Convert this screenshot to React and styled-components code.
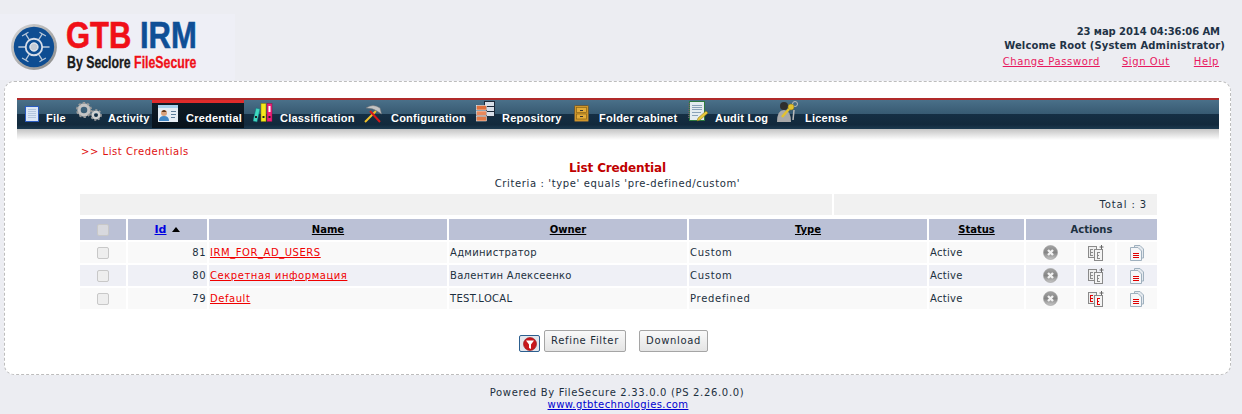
import React from 'react'
import styled, { createGlobalStyle } from 'styled-components'

const GlobalStyle = createGlobalStyle`
    html, body {
        margin: 0;
        padding: 0;
        background: #ecedf2;
    }
    body {
        font-family: "DejaVu Sans", Verdana, sans-serif;
        font-size: 10px;
        color: #1c3040;
    }
`

const Page = styled.div`
    width: 1242px;
    height: 414px;
    overflow: hidden;
`

const Header = styled.div`
    height: 81px;
    display: flex;
    justify-content: space-between;
`

const LogoBox = styled.div`
    width: 224px;
    height: 66px;
    margin-top: 14px;
    padding-left: 11px;
    background: #eeeff6;
    display: flex;
    align-items: center;
    gap: 9px;
`

const LogoText = styled.div`
    display: flex;
    flex-direction: column;
    font-family: "Liberation Sans", Arial, sans-serif;
    font-weight: 700;
    transform: translateY(-2px);
`

const LogoTitle = styled.div`
    font-size: 36px;
    line-height: 32px;
    width: 130px;
    white-space: nowrap;
    transform: scaleX(0.86);
    transform-origin: left;
    color: #f01018;
    -webkit-text-stroke: 0.6px currentColor;

    span {
        color: #0f4f96;
    }
`

const LogoSub = styled.div`
    font-size: 16px;
    line-height: 17px;
    margin: 2px 0 0 1px;
    white-space: nowrap;
    transform: scaleX(0.77);
    transform-origin: left;
    color: #1a1a1a;
    -webkit-text-stroke: 0.3px currentColor;

    span {
        color: #f01018;
    }
`

const UserBox = styled.div`
    width: 300px;
    padding: 25px 17px 0 0;
    text-align: right;
`

const UserLine = styled.div`
    font-weight: 700;
    font-size: 10px;
    line-height: 14px;
    color: #1f3346;
    padding-right: ${props => props.inset || 0}px;
    white-space: nowrap;
    letter-spacing: ${props => props.spacing}px;
`

const TopLinks = styled.div`
    display: flex;
    justify-content: flex-end;
    margin-top: 2px;
    padding-right: 6px;
    line-height: 14px;
`

const TopLink = styled.a`
    color: #e8185f;
    text-decoration: underline;
    letter-spacing: 0.6px;
    margin-left: ${props => props.ml || 0}px;
`

const Panel = styled.div`
    box-sizing: border-box;
    width: 1227px;
    height: 294px;
    margin-left: 4px;
    padding: 16px 11px 0 11px;
    background: #fff;
    border: 1px dashed #bdbdbd;
    border-radius: 10px;
`

const Nav = styled.div`
    display: flex;
    height: 31px;
    box-sizing: border-box;
    width: 1202px;
    margin-left: 1px;
    padding-left: 8px;
    border-top: 2px solid #b02a2a;
    background: linear-gradient(to bottom, #4a7089 0, #375a72 48%, #152f44 48%, #12293c 85%, #1c3a50 100%);
`

const NavShadow = styled.div`
    width: 1202px;
    height: 11px;
    margin-left: 1px;
    background: linear-gradient(to bottom, #c4c4c4, #ffffff);
`

const NavItem = styled.div`
    display: flex;
    align-items: flex-start;
    width: ${props => props.w}px;
    height: ${props => (props.$active ? 28 : 29)}px;
    flex-shrink: 0;
    box-sizing: border-box;
    padding-left: ${props => props.pl || 0}px;
    background: ${props => (props.$active ? 'linear-gradient(to bottom, #0f1b26, #07121b)' : 'none')};
    border-top: ${props => (props.$active ? '3px solid #e02b2b' : '0')};
`

const NavIcon = styled.div`
    width: ${props => props.w}px;
    height: 24px;
    margin-top: ${props => props.top || 0}px;
    flex-shrink: 0;

    svg {
        display: block;
    }
`

const NavLabel = styled.span`
    font-family: "Liberation Sans", Arial, sans-serif;
    font-weight: 700;
    font-size: 11px;
    line-height: 13px;
    letter-spacing: 0.22px;
    color: #fff;
    white-space: nowrap;
    margin-top: ${props => (props.$active ? 9 : 12)}px;
`

const Crumb = styled.div`
    margin: 5px 0 0 65px;
    line-height: 13px;
    color: #e01010;
    letter-spacing: 0.55px;
    font-size: 10px;
`

const Heading = styled.div`
    text-align: center;
    font-weight: 700;
    font-size: 12px;
    line-height: 16px;
    margin-top: 2px;
    letter-spacing: -0.15px;
    color: #c00000;
`

const Criteria = styled.div`
    text-align: center;
    line-height: 14px;
    margin-top: 1px;
    font-size: 10px;
    letter-spacing: 0.63px;
`

const SummaryBar = styled.div`
    display: flex;
    gap: 2px;
    width: 1077px;
    margin: 3px 0 0 64px;
`

const SummaryCell = styled.div`
    box-sizing: border-box;
    height: 21px;
    line-height: 21px;
    width: ${props => props.w}px;
    background: #f1f1f1;
    text-align: right;
    padding-right: ${props => props.pr || 0}px;
    letter-spacing: 0.9px;
`

const Table = styled.table`
    border-collapse: separate;
    border-spacing: 2px;
    table-layout: fixed;
    width: 1081px;
    margin: 2px 0 0 62px;
    font-size: 10px;
`

const HeadCell = styled.th`
    height: 21px;
    padding: 0;
    background: #bbc1d6;
    font-weight: 700;
    color: #000;
    text-align: center;
    font-size: 10px;
`

const HeadLink = styled.a`
    color: ${props => props.$blue ? '#0000e0' : '#000'};
    text-decoration: underline;
    font-size: ${props => props.$blue ? 11 : 10}px;
`

const Arrow = styled.span`
    display: inline-block;
    width: 0;
    height: 0;
    margin-left: 6px;
    vertical-align: 1px;
    border-left: 4px solid transparent;
    border-right: 4px solid transparent;
    border-bottom: 5px solid #000;
`

const ActionsHead = styled(HeadCell)`
    color: #1c3040;
`

const Row = styled.tr`
    td {
        height: 21px;
        padding: 0 0 0 1px;
        background: ${props => (props.$alt ? '#eff0f6' : '#f9f9f9')};
        white-space: nowrap;
        letter-spacing: 0.3px;
    }
`

const CheckCell = styled.td`
    text-align: center;
    padding: 0 !important;
`

const Check = styled.span`
    display: block;
    width: 10px;
    height: 10px;
    margin: 0 auto;
    background: ${props => (props.$head ? '#d8d9de' : '#eeeeee')};
    border: 1px solid #c8c8c8;
    border-radius: 2px;
`

const IdCell = styled.td`
    text-align: right;
    padding-right: 1px !important;
    letter-spacing: 0.5px !important;
`

const NameLink = styled.a`
    color: #f00000;
    text-decoration: underline;
    letter-spacing: 0.55px;
`

const TypeCell = styled.td`
    letter-spacing: 0.7px !important;
`

const IconCell = styled.td`
    text-align: center;
    padding: 0 !important;

    svg {
        display: block;
        margin: 0 auto;
    }
`

const Buttons = styled.div`
    display: flex;
    justify-content: center;
    align-items: flex-start;
    margin-top: 19px;
    padding-right: 8px;
`

const FilterIcon = styled.div`
    width: 19px;
    height: 15px;
    margin-top: 5px;
    margin-right: 4px;
    border: 1px solid #2c5f8f;
    border-radius: 2px;
    display: flex;
    align-items: center;
    justify-content: center;
    background: #e4e6ec;
`

const Button = styled.div`
    box-sizing: border-box;
    height: 22px;
    width: ${props => props.w}px;
    margin-right: ${props => props.mr || 0}px;
    border: 1px solid #a5a5a5;
    border-radius: 2px;
    background: linear-gradient(to bottom, #f9f9f9, #e4e4e4);
    text-align: center;
    line-height: 20px;
    letter-spacing: 0.65px;
    color: #1c2c38;
`

const Footer = styled.div`
    margin-top: 12px;
    padding-right: 8px;
    text-align: center;
    line-height: 12px;
    letter-spacing: 0.67px;
    color: #1c3040;

    a {
        display: block;
        padding-left: 2px;
        letter-spacing: 0.4px;
        color: #0000d0;
        text-decoration: underline;
    }
`

const LogoMark = () => (
    <svg width="50" height="50" viewBox="0 0 50 50">
        <defs>
            <linearGradient id="rim" x1="0" y1="0" x2="1" y2="1">
                <stop offset="0" stopColor="#d8d8d8" />
                <stop offset="1" stopColor="#888" />
            </linearGradient>
        </defs>
        <circle cx="25" cy="25" r="25" fill="url(#rim)" />
        <circle cx="25" cy="25" r="22" fill="#0e4d92" />
        <g stroke="#b9c8da" strokeWidth="1.4" fill="none">
            <path d="M8 25H42M16 11L34 39M34 11L16 39" />
            <path d="M12 13l7-4M38 13l-7-4M12 37l7 4M38 37l-7 4" />
        </g>
        <circle cx="25" cy="25" r="9" fill="#0e4d92" stroke="#d6dde8" strokeWidth="2" />
        <circle cx="25" cy="25" r="4.5" fill="#c5ccd6" stroke="#fff" />
    </svg>
)

const FileIcon = () => (
    <svg width="15" height="16" viewBox="0 0 15 16">
        <rect x="0.5" y="0.5" width="13" height="15" fill="#dbe6f6" stroke="#2a5cc0" />
        <path d="M3 3.5h8M3 5.5h8M3 7.5h8M3 9.5h8M3 11.5h8" stroke="#b4c6de" />
    </svg>
)

const GearsIcon = () => (
    <svg width="26" height="20" viewBox="0 0 26 20">
        <circle cx="8" cy="8" r="5" fill="none" stroke="#c4c4c4" strokeWidth="3.4" />
        <circle cx="8" cy="8" r="7" fill="none" stroke="#9b9b9b" strokeWidth="2" strokeDasharray="2.4 2.1" />
        <circle cx="20" cy="13" r="3.3" fill="none" stroke="#d0d0d0" strokeWidth="2.6" />
        <circle cx="20" cy="13" r="5" fill="none" stroke="#a0a0a0" strokeWidth="1.6" strokeDasharray="2 1.7" />
    </svg>
)

const CardIcon = () => (
    <svg width="20" height="17" viewBox="0 0 20 17">
        <rect x="0" y="0" width="20" height="17" fill="#e6edf4" />
        <rect x="0" y="0" width="20" height="3" fill="#a8d0ec" />
        <circle cx="6" cy="8" r="3" fill="#d9a27c" />
        <path d="M3.5 7q2.5-4 5 0z" fill="#5a3518" />
        <path d="M1 16q0-5 5-5t5 5z" fill="#3f86c4" />
        <path d="M13 6.5h5M13 9.5h5M13 12.5h4" stroke="#5d7d98" />
    </svg>
)

const BindersIcon = () => (
    <svg width="20" height="20" viewBox="0 0 20 20">
        <path d="M3 5l4 1-3 13-4-1z" fill="#3fd8c0" stroke="#167" strokeWidth="0.5" />
        <rect x="8" y="0.5" width="5" height="18" fill="#f4e81c" stroke="#8a8200" strokeWidth="0.5" />
        <rect x="14" y="0.5" width="5" height="18" fill="#f01e78" stroke="#8a1040" strokeWidth="0.5" />
        <rect x="15.5" y="3" width="2" height="6" fill="#fff" />
        <rect x="9.5" y="13" width="2" height="2" fill="#222" />
        <rect x="15.5" y="13" width="2" height="2" fill="#222" />
        <rect x="2" y="13" width="2" height="2" fill="#222" />
    </svg>
)

const ToolsIcon = () => (
    <svg width="18" height="18" viewBox="0 0 18 18">
        <path d="M1 17L12 6" stroke="#f2c22a" strokeWidth="2" />
        <path d="M16 17L6 6" stroke="#d81818" strokeWidth="2" />
        <path d="M2 3Q9-2 16 3l1.5 6-4.5-3Q9 3 2 3z" fill="#c4c4c4" stroke="#777" strokeWidth="0.5" />
    </svg>
)

const RepoIcon = () => (
    <svg width="19" height="21" viewBox="0 0 19 21">
        <rect x="8.5" y="0.5" width="10" height="5" fill="#d8dee8" stroke="#1c2a3a" />
        <rect x="10.5" y="5.5" width="8" height="5" fill="#d8dee8" stroke="#1c2a3a" />
        <rect x="10.5" y="10.5" width="8" height="5" fill="#d8dee8" stroke="#1c2a3a" />
        <rect x="0.5" y="4.5" width="10" height="4.5" fill="#e0703c" stroke="#fff" strokeWidth="0.5" />
        <rect x="0.5" y="10" width="10" height="4.5" fill="#e8885c" stroke="#fff" strokeWidth="0.5" />
        <rect x="0.5" y="15.5" width="10" height="4.5" fill="#e07a48" stroke="#fff" strokeWidth="0.5" />
    </svg>
)

const CabinetIcon = () => (
    <svg width="15" height="17" viewBox="0 0 15 17">
        <rect x="0.5" y="0.5" width="14" height="16" rx="1" fill="#d0962a" stroke="#6a5a3a" />
        <rect x="2.5" y="2.5" width="10" height="5" fill="#e4ac3a" stroke="#8a6416" strokeWidth="0.7" />
        <rect x="2.5" y="9" width="10" height="5" fill="#e4ac3a" stroke="#8a6416" strokeWidth="0.7" />
        <path d="M6 5.5h3M6 11.5h3" stroke="#333" />
    </svg>
)

const NotebookIcon = () => (
    <svg width="20" height="21" viewBox="0 0 20 21">
        <rect x="1.5" y="0.5" width="15" height="19" fill="#e4ecf0" stroke="#2d7a40" />
        <path d="M4 4.5h10M4 6.5h10M4 8.5h10M4 11.5h9M4 14.5h6" stroke="#8aa2b8" />
        <path d="M1 2v16" stroke="#666" strokeWidth="2" strokeDasharray="1 1" />
        <path d="M9 20l1-3 8-7 2 2-8 7z" fill="#e8c83a" stroke="#7a6a1a" strokeWidth="0.5" />
    </svg>
)

const KeyIcon = () => (
    <svg width="21" height="22" viewBox="0 0 21 22">
        <circle cx="7" cy="5" r="4" fill="#2e2e2e" />
        <path d="M0 21q0-12 7-12t7 12z" fill="#a9a9a9" />
        <circle cx="18" cy="3" r="2.5" fill="none" stroke="#bbb" />
        <path d="M17 9l-1 10" stroke="#bbb" strokeWidth="1.5" />
        <circle cx="14" cy="6" r="3" fill="#e2c22e" stroke="#8c7512" strokeWidth="0.5" />
        <path d="M12 8l-7 8" stroke="#e2c22e" strokeWidth="2.5" />
    </svg>
)

const DeleteIcon = () => (
    <svg width="15" height="15" viewBox="0 0 15 15">
        <defs>
            <linearGradient id="ball" x1="0" y1="0" x2="0" y2="1">
                <stop offset="0" stopColor="#a4a4a4" />
                <stop offset="0.5" stopColor="#858585" />
                <stop offset="1" stopColor="#c8c8c8" />
            </linearGradient>
        </defs>
        <circle cx="7.5" cy="7.5" r="7" fill="url(#ball)" stroke="#9a9a9a" strokeWidth="0.6" />
        <path d="M5 5l5 5M10 5l-5 5" stroke="#f2f2f2" strokeWidth="2.4" />
    </svg>
)

const CopyIcon = ({ red }) => {
    const color = red ? '#e00000' : '#8a8a8a'
    return (
        <svg width="16" height="16" viewBox="0 0 16 16">
            <rect x="0.5" y="1.5" width="8" height="11" fill="#eee" stroke="#8a8a8a" />
            <path d="M2.5 4v6M2 4.5h3M2 7.5h3M2 10.5h3" stroke={color} />
            <rect x="6.5" y="4.5" width="8" height="11" fill="#f4f4f4" stroke="#8a8a8a" />
            <path d="M9.5 7v6M9 7.5h3M9 10.5h2M9 13.5h3" stroke={color} />
            <path d="M13.5 0v4M11.5 2h4" stroke="#666" />
        </svg>
    )
}

const DocIcon = () => (
    <svg width="14" height="16" viewBox="0 0 14 16">
        <path d="M4.5 0.5H10l3.5 3.5V13H4.5z" fill="#e4e9ee" stroke="#9fb0be" />
        <path d="M0.5 2.5H8l3.5 3.5v9.5H0.5z" fill="#f5f6f8" stroke="#9fb0be" />
        <path d="M3 8.5h6M3 10.5h6M3 12.5h6" stroke="#e00000" />
    </svg>
)

const FunnelIcon = () => (
    <svg width="14" height="14" viewBox="0 0 14 14">
        <circle cx="7" cy="7" r="6.5" fill="#c8171c" stroke="#8c1014" strokeWidth="0.6" />
        <path d="M3 3.5h8L8 7.5V12L6 11V7.5z" fill="#fff" />
    </svg>
)

const navItems = [
    { label: 'File', icon: FileIcon, w: 51, iconW: 21, top: 6 },
    { label: 'Activity', icon: GearsIcon, w: 76, iconW: 32, top: 2 },
    { label: 'Credential', icon: CardIcon, w: 92, pl: 6, iconW: 28, top: 2, active: true },
    { label: 'Classification', icon: BindersIcon, w: 120, pl: 9, iconW: 27, top: 3 },
    { label: 'Configuration', icon: ToolsIcon, w: 112, iconW: 27, top: 5 },
    { label: 'Repository', icon: RepoIcon, w: 98, iconW: 26, top: 1 },
    { label: 'Folder cabinet', icon: CabinetIcon, w: 114, iconW: 25, top: 5 },
    { label: 'Audit Log', icon: NotebookIcon, w: 89, iconW: 27, top: 1 },
    { label: 'License', icon: KeyIcon, w: 80, iconW: 28, top: 1 }
]

const rows = [
    { id: 81, name: 'IRM_FOR_AD_USERS', owner: 'Администратор', type: 'Custom' },
    { id: 80, name: 'Секретная информация', owner: 'Валентин Алексеенко', type: 'Custom', alt: true },
    { id: 79, name: 'Default', owner: 'TEST.LOCAL', type: 'Predefined', red: true }
]

const App = () => {
    return (
        <Page>
            <GlobalStyle />
            <Header>
                <LogoBox>
                    <LogoMark />
                    <LogoText>
                        <LogoTitle>GTB <span>IRM</span></LogoTitle>
                        <LogoSub>By Seclore <span>FileSecure</span></LogoSub>
                    </LogoText>
                </LogoBox>
                <UserBox>
                    <UserLine inset={5} spacing={-0.08}>23 мар 2014 04:36:06 AM</UserLine>
                    <UserLine spacing={0.12}>Welcome Root (System Administrator)</UserLine>
                    <TopLinks>
                        <TopLink>Change Password</TopLink>
                        <TopLink ml={22}>Sign Out</TopLink>
                        <TopLink ml={24}>Help</TopLink>
                    </TopLinks>
                </UserBox>
            </Header>
            <Panel>
                <Nav>
                    {navItems.map(item => {
                        const Icon = item.icon
                        return (
                            <NavItem key={item.label} w={item.w} pl={item.pl} $active={item.active}>
                                <NavIcon w={item.iconW} top={item.top}><Icon /></NavIcon>
                                <NavLabel $active={item.active}>{item.label}</NavLabel>
                            </NavItem>
                        )
                    })}
                </Nav>
                <NavShadow />
                <Crumb>&gt;&gt; List Credentials</Crumb>
                <Heading>List Credential</Heading>
                <Criteria>Criteria : 'type' equals 'pre-defined/custom'</Criteria>
                <SummaryBar>
                    <SummaryCell w={752} />
                    <SummaryCell w={323} pr={10}>Total : 3</SummaryCell>
                </SummaryBar>
                <Table>
                    <colgroup>
                        <col width="46" />
                        <col width="79" />
                        <col width="238" />
                        <col width="238" />
                        <col width="238" />
                        <col width="95" />
                        <col width="48" />
                        <col width="39" />
                        <col width="40" />
                    </colgroup>
                    <tbody>
                        <tr>
                            <HeadCell><Check $head /></HeadCell>
                            <HeadCell><HeadLink $blue>Id</HeadLink><Arrow /></HeadCell>
                            <HeadCell><HeadLink>Name</HeadLink></HeadCell>
                            <HeadCell><HeadLink>Owner</HeadLink></HeadCell>
                            <HeadCell><HeadLink>Type</HeadLink></HeadCell>
                            <HeadCell><HeadLink>Status</HeadLink></HeadCell>
                            <ActionsHead colSpan={3}>Actions</ActionsHead>
                        </tr>
                        {rows.map(row => (
                            <Row key={row.id} $alt={row.alt}>
                                <CheckCell><Check /></CheckCell>
                                <IdCell>{row.id}</IdCell>
                                <td><NameLink>{row.name}</NameLink></td>
                                <td>{row.owner}</td>
                                <TypeCell>{row.type}</TypeCell>
                                <td>Active</td>
                                <IconCell><DeleteIcon /></IconCell>
                                <IconCell><CopyIcon red={row.red} /></IconCell>
                                <IconCell><DocIcon /></IconCell>
                            </Row>
                        ))}
                    </tbody>
                </Table>
                <Buttons>
                    <FilterIcon><FunnelIcon /></FilterIcon>
                    <Button w={82} mr={13}>Refine Filter</Button>
                    <Button w={69}>Download</Button>
                </Buttons>
            </Panel>
            <Footer>
                Powered By FileSecure 2.33.0.0 (PS 2.26.0.0)
                <a>www.gtbtechnologies.com</a>
            </Footer>
        </Page>
    )
}

export default App
